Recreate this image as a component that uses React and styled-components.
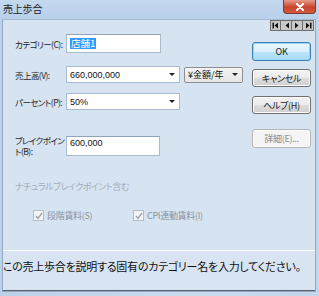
import React from "react";
import styled, { createGlobalStyle } from "styled-components";

const Global = createGlobalStyle`
  html, body { margin: 0; padding: 0; background: #d6e3f1; }
  body {
    font-family: "Noto Sans CJK JP", "Liberation Sans", sans-serif;
    font-feature-settings: "palt";
  }
  * { box-sizing: border-box; }
`;

const Window = styled.div`
  width: 319px;
  height: 296px;
  display: flex;
  flex-direction: column;
  background: linear-gradient(to right, #bcd2ea, #c9dbef 60%, #c2d6ec);
  overflow: hidden;
`;

const TitleBar = styled.div`
  height: 19px;
  display: flex;
  align-items: flex-start;
  justify-content: space-between;
  padding-left: 3px;
  background: linear-gradient(to bottom, #c4d8ee, #b9d0ea);
`;

const Title = styled.div`
  font-size: 10px;
  line-height: 18px;
  color: #1a1a1a;
  letter-spacing: -0.2px;
`;

const CloseBtn = styled.div`
  width: 33px;
  height: 14px;
  margin-right: 3px;
  border: 1px solid #7a3a2e;
  border-top: none;
  border-radius: 0 0 4px 4px;
  background: linear-gradient(to bottom, #e79a89, #c9432e 55%, #d35a3f);
  display: flex;
  align-items: center;
  justify-content: center;
`;

const Frame = styled.div`
  flex: 1;
  display: flex;
  flex-direction: column;
  margin: 0 3px 4px 2px;
  background: #d6e3f1;
  border: 1px solid #93a7bf;
  border-top-color: #a7bad0;
`;

const NavRow = styled.div`
  height: 12px;
  display: flex;
  justify-content: flex-end;
  padding-right: 1px;
`;

const NavBtn = styled.div`
  width: 11px;
  height: 11px;
  background: #c9c9c9;
  border: 1px solid #6d6d6d;
  border-left-width: ${(p) => (p.$first ? "1px" : "0")};
  display: flex;
  align-items: center;
  justify-content: center;
`;

const Main = styled.div`
  height: 218px;
  display: flex;
`;

const FormCol = styled.div`
  width: 249px;
  display: flex;
  flex-direction: column;
  padding-left: 12px;
`;

const ButtonCol = styled.div`
  width: 60px;
  display: flex;
  flex-direction: column;
`;

const Row = styled.div`
  display: flex;
  align-items: ${(p) => p.$align || "center"};
  margin-top: ${(p) => p.$mt}px;
  height: ${(p) => p.$h}px;
`;

const Label = styled.div`
  width: 51px;
  flex: none;
  font-size: 8.5px;
  line-height: ${(p) => (p.$top ? "11px" : "10px")};
  letter-spacing: -0.55px;
  color: #1e1e1e;
  white-space: nowrap;
  margin-top: ${(p) => (p.$top ? "-1px" : "0")};
`;

const TextBox = styled.div`
  width: ${(p) => p.$w}px;
  height: ${(p) => p.$h}px;
  background: #fff;
  border: 1px solid #a9bbd0;
  border-top-color: #8ea3bb;
  display: flex;
  align-items: ${(p) => p.$align || "center"};
  padding: 0 3px;
  font-size: 9px;
  color: #111;
  font-family: "Liberation Sans", "Noto Sans CJK JP", sans-serif;
`;

const Selected = styled.span`
  background: #3399ff;
  color: #fff;
  padding: 0 1px;
  font-family: "Noto Sans CJK JP", sans-serif;
  font-size: 9.5px;
  line-height: 11px;
`;

const Combo = styled.div`
  width: ${(p) => p.$w}px;
  height: ${(p) => p.$h}px;
  margin-left: ${(p) => p.$ml || 0}px;
  background: ${(p) => (p.$button ? "linear-gradient(#f4f4f4, #e6e6e6)" : "#fff")};
  border: 1px solid ${(p) => (p.$button ? "#8e8e8e" : "#a9bbd0")};
  border-radius: ${(p) => (p.$button ? "2px" : "0")};
  display: flex;
  align-items: center;
  justify-content: space-between;
  padding: 0 4px 0 3px;
  font-size: 9px;
  color: #111;
  font-family: ${(p) =>
    p.$button ? '"Noto Sans CJK JP", sans-serif' : '"Liberation Sans", "Noto Sans CJK JP", sans-serif'};
`;

const Arrow = styled.span`
  width: 0;
  height: 0;
  border-left: 3px solid transparent;
  border-right: 3px solid transparent;
  border-top: 3px solid #222;
`;

const Button = styled.div`
  margin-top: ${(p) => p.$mt}px;
  width: 59px;
  height: ${(p) => p.$h}px;
  border: 1px solid ${(p) => (p.$focus ? "#3c7fb1" : p.$disabled ? "#b5b5b5" : "#707070")};
  border-radius: 3px;
  background: ${(p) =>
    p.$focus
      ? "linear-gradient(#eaf6fd, #d9f0fc 50%, #bee6fd 51%, #a7d9f5)"
      : p.$disabled
      ? "#f4f4f4"
      : "linear-gradient(#f2f2f2, #ebebeb 50%, #dddddd 51%, #cfcfcf)"};
  box-shadow: ${(p) => (p.$focus ? "inset 0 0 0 1px #9ad6f5" : "inset 0 0 0 1px #fcfcfc")};
  display: flex;
  align-items: center;
  justify-content: center;
  font-size: 9px;
  letter-spacing: -0.3px;
  color: ${(p) => (p.$disabled ? "#8d8d8d" : "#1a1a1a")};
`;

const DisabledText = styled.div`
  margin-top: ${(p) => p.$mt}px;
  font-size: 9px;
  line-height: 11px;
  letter-spacing: -0.5px;
  color: #a5adb8;
`;

const CheckRow = styled.div`
  margin-top: 17px;
  display: flex;
  padding-left: 18px;
`;

const Check = styled.div`
  width: ${(p) => p.$w}px;
  display: flex;
  align-items: center;
  gap: 3px;
  font-size: 9px;
  letter-spacing: -0.3px;
  color: #8d949e;
`;

const Box = styled.div`
  width: 11px;
  height: 11px;
  border: 1px solid #b5bcc6;
  background: #f2f4f6;
  display: flex;
  align-items: center;
  justify-content: center;
`;

const Status = styled.div`
  flex: 1;
  border-top: 1px solid #ffffff;
  border-bottom: 1px solid #59606a;
  background: #d8e4f1;
  padding: 7px 0 0 0;
  font-size: 11px;
  line-height: 16px;
  letter-spacing: -0.25px;
  color: #111;
  white-space: nowrap;
`;

const NavArrow = ({ dir, bar }) => (
  <svg width="7" height="7" viewBox="0 0 7 7">
    {bar === "left" && <rect x="0.5" y="0.5" width="1.5" height="6" fill="#111" />}
    {dir === "left" ? (
      <polygon points="6,0.5 6,6.5 2.5,3.5" fill="#111" />
    ) : (
      <polygon points="1,0.5 1,6.5 4.5,3.5" fill="#111" />
    )}
    {bar === "right" && <rect x="5" y="0.5" width="1.5" height="6" fill="#111" />}
  </svg>
);

const Tick = () => (
  <svg width="8" height="8" viewBox="0 0 8 8">
    <polyline points="1,4 3,6.5 7,1" fill="none" stroke="#9aa3ad" strokeWidth="1.3" />
  </svg>
);

export default function App() {
  return (
    <>
      <Global />
      <Window>
        <TitleBar>
          <Title>売上歩合</Title>
          <CloseBtn>
            <svg width="10" height="8" viewBox="0 0 10 8">
              <path d="M2 1 L8 7 M8 1 L2 7" stroke="#fff" strokeWidth="2" strokeLinecap="round" />
            </svg>
          </CloseBtn>
        </TitleBar>
        <Frame>
          <NavRow>
            <NavBtn $first>
              <NavArrow dir="left" bar="left" />
            </NavBtn>
            <NavBtn>
              <NavArrow dir="left" />
            </NavBtn>
            <NavBtn>
              <NavArrow dir="right" />
            </NavBtn>
            <NavBtn>
              <NavArrow dir="right" bar="right" />
            </NavBtn>
          </NavRow>
          <Main>
            <FormCol>
              <Row $mt={2} $h={19}>
                <Label>カテゴリー(C):</Label>
                <TextBox $w={95} $h={19}>
                  <Selected>店舗1</Selected>
                </TextBox>
              </Row>
              <Row $mt={13} $h={17}>
                <Label>売上高(V):</Label>
                <Combo $w={114} $h={17}>
                  <span>660,000,000</span>
                  <Arrow />
                </Combo>
                <Combo $w={59} $h={16} $ml={4} $button>
                  <span>¥金額/年</span>
                  <Arrow />
                </Combo>
              </Row>
              <Row $mt={10} $h={17}>
                <Label>パーセント(P):</Label>
                <Combo $w={114} $h={17}>
                  <span>50%</span>
                  <Arrow />
                </Combo>
              </Row>
              <Row $mt={26} $h={20} $align="flex-start">
                <Label $top>
                  ブレイクポイン
                  <br />
                  ト(B):
                </Label>
                <TextBox $w={94} $h={20} $align="flex-start">
                  <span style={{ lineHeight: "13px" }}>600,000</span>
                </TextBox>
              </Row>
              <DisabledText $mt={25}>ナチュラルブレイクポイント含む</DisabledText>
              <CheckRow>
                <Check $w={100}>
                  <Box>
                    <Tick />
                  </Box>
                  段階賃料(S)
                </Check>
                <Check $w={110}>
                  <Box>
                    <Tick />
                  </Box>
                  CPI連動賃料(I)
                </Check>
              </CheckRow>
            </FormCol>
            <ButtonCol>
              <Button $mt={10} $h={19} $focus>OK</Button>
              <Button $mt={8} $h={18}>キャンセル</Button>
              <Button $mt={9} $h={18}>ヘルプ(H)</Button>
              <Button $mt={15} $h={19} $disabled>詳細(E)...</Button>
            </ButtonCol>
          </Main>
          <Status>この売上歩合を説明する固有のカテゴリー名を入力してください。</Status>
        </Frame>
      </Window>
    </>
  );
}
